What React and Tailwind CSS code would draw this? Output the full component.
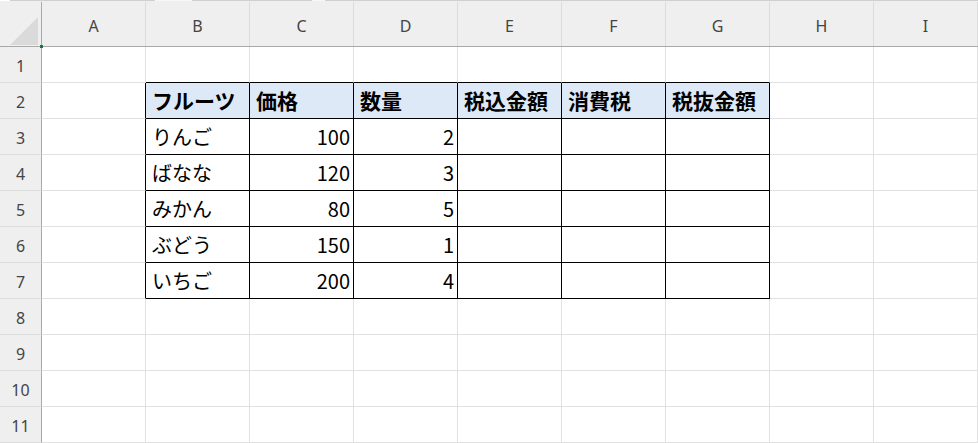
import React from 'react';

const COLS = ['A', 'B', 'C', 'D', 'E', 'F', 'G', 'H', 'I'];
const ROWS = [1, 2, 3, 4, 5, 6, 7, 8, 9, 10, 11];

const HEADERS = ['フルーツ', '価格', '数量', '税込金額', '消費税', '税抜金額'];
const FRUITS = [
  ['りんご', 100, 2],
  ['ばなな', 120, 3],
  ['みかん', 80, 5],
  ['ぶどう', 150, 1],
  ['いちご', 200, 4],
];

const font = { fontFamily: '"Noto Sans CJK JP", "Noto Sans", sans-serif' };

// table occupies B2:G7 (col index 1..6, rows 2..7)
const inTable = (r, c) => r >= 2 && r <= 7 && c >= 1 && c <= 6;

const Cell = ({ r, c }) => {
  const rightBlack = inTable(r, c) || (c === 0 && r >= 2 && r <= 7);
  const bottomBlack = inTable(r, c) || (r === 1 && c >= 1 && c <= 6);
  const isHead = r === 2 && c >= 1 && c <= 6;

  let content = null;
  let align = 'justify-start pl-[6px]';

  if (isHead) {
    content = HEADERS[c - 1];
  } else if (r >= 3 && r <= 7) {
    const row = FRUITS[r - 3];
    if (c === 1) content = row[0];
    if (c === 2 || c === 3) {
      content = row[c - 1];
      align = 'justify-end pr-[3px]';
    }
  }

  return (
    <div
      className={[
        'flex h-[36px] w-[104px] items-center border-r border-b leading-none text-black',
        rightBlack ? 'border-r-black' : 'border-r-[#e1e1e1]',
        bottomBlack ? 'border-b-black' : 'border-b-[#e1e1e1]',
        isHead ? 'bg-[#dde9f6] font-bold text-[21px]' : 'bg-white font-normal text-[20px]',
        align,
      ].join(' ')}
      style={font}
    >
      {content}
    </div>
  );
};

export default function App() {
  return (
    <div className="w-[978px] h-[443px] overflow-hidden bg-white select-none">
      {/* thin strip above the column headers */}
      <div className="flex h-[2px] bg-[#efefef]">
        <div className="w-[10px] h-[1px] bg-white" />
        <div className="w-[145px] h-[1px] bg-[#cfcfcf]" />
        <div className="w-[37px] h-[1px] bg-[#f7f7f7]" />
        <div className="w-[120px] h-[1px] bg-[#cfcfcf]" />
        <div className="w-[13px] h-[1px] bg-[#f7f7f7]" />
        <div className="flex-1 h-[1px] bg-[#cfcfcf]" />
      </div>

      {/* column headers */}
      <div className="flex h-[45px] bg-[#efefef] border-b border-b-[#a9a9a9]">
        <div className="w-[42px] h-full border-r border-r-[#a9a9a9] relative">
          <svg width="42" height="44" className="absolute left-0 top-0">
            <polygon points="10,43 38,43 38,15" fill="#dadada" />
          </svg>
          <div className="absolute right-[-2px] bottom-[-2px] w-[3px] h-[3px] bg-[#217346]" />
        </div>
        {COLS.map((c) => (
          <div
            key={c}
            className="w-[104px] h-full flex items-center justify-center border-r border-r-[#dcdcdc] text-[16px] text-[#444]"
            style={{ fontFamily: '"Noto Sans", sans-serif' }}
          >
            <span className="mt-[4px]">{c}</span>
          </div>
        ))}
      </div>

      {/* grid */}
      {ROWS.map((r) => (
        <div key={r} className="flex">
          <div
            className="w-[42px] h-[36px] flex items-center justify-center bg-[#efefef] border-r border-r-[#a9a9a9] border-b border-b-[#dcdcdc] text-[16px] text-[#444]"
            style={{ fontFamily: '"Noto Sans", sans-serif' }}
          >
            <span className="mt-[2px]">{r}</span>
          </div>
          {COLS.map((c, ci) => (
            <Cell key={c} r={r} c={ci} />
          ))}
        </div>
      ))}
    </div>
  );
}
